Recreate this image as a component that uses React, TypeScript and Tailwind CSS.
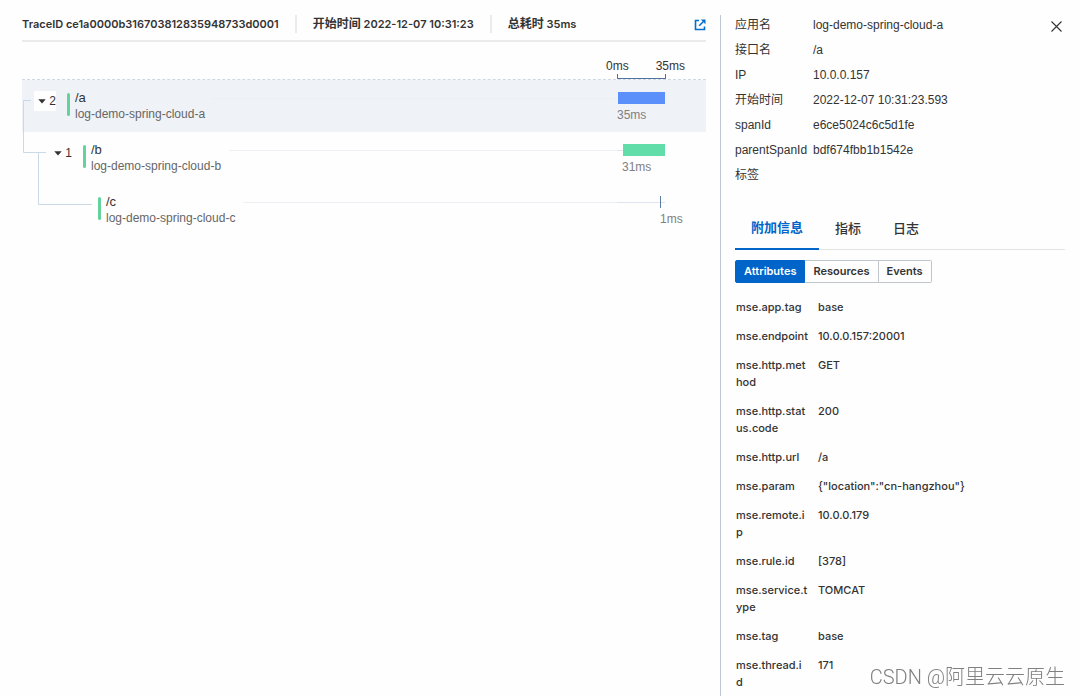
import React from 'react';

type Span = {
  path: string;
  app: string;
  count?: number;
  duration: string;
  indent: string;
  selected?: boolean;
  bar: string;
  label: string;
};

const spans: Span[] = [
  { path: '/a', app: 'log-demo-spring-cloud-a', count: 2, duration: '35ms', indent: 'pl-3', selected: true, bar: 'ml-px w-[47px] bg-[#5b8ff9]', label: 'ml-0' },
  { path: '/b', app: 'log-demo-spring-cloud-b', count: 1, duration: '31ms', indent: 'pl-7', bar: 'ml-1.5 w-[42px] bg-[#61ddaa]', label: 'ml-[5px]' },
  { path: '/c', app: 'log-demo-spring-cloud-c', duration: '1ms', indent: 'pl-[76px]', bar: 'ml-[43px] w-px bg-[#5d7fa6]', label: 'ml-[43px]' },
];

const details = [
  ['应用名', 'log-demo-spring-cloud-a'],
  ['接口名', '/a'],
  ['IP', '10.0.0.157'],
  ['开始时间', '2022-12-07 10:31:23.593'],
  ['spanId', 'e6ce5024c6c5d1fe'],
  ['parentSpanId', 'bdf674fbb1b1542e'],
  ['标签', ''],
];

const attributes = [
  ['mse.app.tag', 'base'],
  ['mse.endpoint', '10.0.0.157:20001'],
  ['mse.http.method', 'GET'],
  ['mse.http.status.code', '200'],
  ['mse.http.url', '/a'],
  ['mse.param', '{"location":"cn-hangzhou"}'],
  ['mse.remote.ip', '10.0.0.179'],
  ['mse.rule.id', '[378]'],
  ['mse.service.type', 'TOMCAT'],
  ['mse.tag', 'base'],
  ['mse.thread.id', '171'],
];

const TraceHeader: React.FC = () => (
  <header className="flex h-[27px] items-start border-b-2 border-[#ebebeb] font-['Inter','Noto_Sans_CJK_SC',sans-serif] text-[11px] leading-[18px] font-semibold">
    <h1 className="border-r-2 border-[#ebebeb] pr-4">TraceID ce1a0000b316703812835948733d0001</h1>
    <p className="border-r-2 border-[#ebebeb] px-4">
      <span className="text-xs leading-[18px]">开始时间</span> 2022-12-07 10:31:23
    </p>
    <p className="pl-4">
      <span className="text-xs leading-[18px]">总耗时</span> 35ms
    </p>
    <a href="#trace" aria-label="Open trace" className="mt-1 ml-auto">
      <svg width="12" height="12" viewBox="0 0 12 12" fill="none" stroke="#0070cc" strokeWidth="1.6">
        <path d="M5 1.5H1.5v9h9V7.5" />
        <path d="M5.2 6.8l4-4" />
        <path d="M6.8 .5h4.7v4.7z" fill="#0070cc" stroke="none" />
      </svg>
    </a>
  </header>
);

const SpanRow: React.FC<{ span: Span }> = ({ span }) => (
  <li className={`flex h-[52px] pt-[11px] pr-[41px] ${span.indent} ${span.selected ? 'bg-[#eff2f7]' : ''}`}>
    {span.count !== undefined && (
      <button type="button" aria-label={`Toggle ${span.path}`} className={`mr-[11px] flex h-5 w-[22px] shrink-0 items-center justify-between pl-1 text-xs ${span.selected ? 'bg-white' : ''}`}>
        <svg width="8" height="5" viewBox="0 0 8 5" fill="#333">
          <path d="M.3.3h7.4L4 4.6z" />
        </svg>
        {span.count}
      </button>
    )}
    <span className="mt-0.5 h-[23px] w-[3px] shrink-0 rounded-sm bg-[#64d29b]" />
    <div className="-mt-px ml-[5px] leading-4">
      <p className="text-[13px]">{span.path}</p>
      <p className="text-[#666]">{span.app}</p>
    </div>
    <div className={`mt-[7px] ml-2 h-px flex-1 ${span.selected ? 'bg-[#ebeff4]' : 'bg-[#edf1f6]'}`} />
    <div className="w-12">
      <div className="relative mt-px">
        <div className={`absolute inset-x-0 top-1.5 h-px ${span.selected ? '' : 'bg-[#dce5ee]'}`} />
        <div className={`relative h-3 ${span.bar}`} />
      </div>
      <p className={`mt-[3px] text-[#808080] ${span.label}`}>{span.duration}</p>
    </div>
  </li>
);

const TraceTree: React.FC = () => (
  <section className="mt-3">
    <div className="flex h-5 justify-end gap-[27px] pr-[21px] leading-6">
      <span>0ms</span>
      <span>35ms</span>
    </div>
    <div className="mr-10 ml-auto h-[5px] w-[49px] border-x border-b border-[#4f739c]" />
    <div className="relative border-t border-dashed border-[#ccd8e4]">
      <ul>
        {spans.map((span) => (
          <SpanRow key={span.path} span={span} />
        ))}
      </ul>
      {/* connectors between parent and child spans */}
      <svg className="pointer-events-none absolute top-0 left-0" width="76" height="156" fill="none" stroke="#cbd9e6">
        <path d="M9 20.5H1.5v52H24" />
        <path d="M16.5 72.5v52H70" />
      </svg>
    </div>
  </section>
);

const SpanPanel: React.FC = () => (
  <aside className="mt-[15px] w-1/3 border-l border-[#c0c6d0] pr-[15px] pl-[14px]">
    <div className="flex items-start justify-between">
      <dl className="flex flex-col gap-[5px] leading-5">
        {details.map(([name, value]) => (
          <div key={name} className="flex h-5">
            <dt className="w-[78px] whitespace-nowrap">{name}</dt>
            <dd>{value}</dd>
          </div>
        ))}
      </dl>
      <button type="button" aria-label="Close" className="mt-1.5 mr-[3px]">
        <svg width="11" height="11" viewBox="0 0 11 11" stroke="#333" strokeWidth="1.1">
          <path d="M.5.5l10 10M10.5.5l-10 10" />
        </svg>
      </button>
    </div>

    <nav className="mt-[23px] flex h-[42px] border-b border-[#e3e4e6] text-[13px] leading-10 font-medium">
      <button type="button" className="h-[42px] border-b-2 border-[#0064c8] px-4 font-bold text-[#0064c8]">附加信息</button>
      <button type="button" className="px-4">指标</button>
      <button type="button" className="px-4">日志</button>
    </nav>

    <div className="font-['Inter','Noto_Sans_CJK_SC',sans-serif] text-[11px] font-medium">
      <div className="mt-2.5 flex h-[23px] font-semibold">
        <button type="button" className="rounded-l-xs border border-[#0064c8] bg-[#0064c8] px-2 text-white">Attributes</button>
        <button type="button" className="border-y border-r border-[#c0c6cc] px-2">Resources</button>
        <button type="button" className="rounded-r-xs border-y border-r border-[#c0c6cc] px-2">Events</button>
      </div>
      <dl className="mt-2.5 pl-px leading-[17px]">
        {attributes.map(([name, value]) => (
          <div key={name} className="flex gap-2.5 py-1.5">
            <dt className="w-[72px] shrink-0 break-all">{name}</dt>
            <dd>{value}</dd>
          </div>
        ))}
      </dl>
    </div>
  </aside>
);

const App: React.FC = () => {
  return (
    <div className="relative flex min-h-screen bg-[#fefefe] font-['Liberation_Sans','Noto_Sans_CJK_SC',sans-serif] text-xs text-[#333]">
      <main className="w-2/3 pt-[15px] pr-3.5 pl-[22px]">
        <TraceHeader />
        <TraceTree />
      </main>
      <SpanPanel />
      <p className="fixed right-[15px] bottom-1 font-['Roboto','Noto_Sans_CJK_SC',sans-serif] text-xl leading-[30px] font-light text-[#808080]">CSDN @阿里云云原生</p>
    </div>
  );
};

export default App;
